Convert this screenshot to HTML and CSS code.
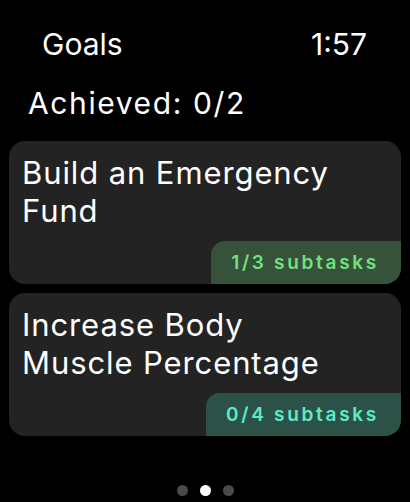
FILE: index.html
```html
<!DOCTYPE html>
<html>
<head>
<meta charset="utf-8">
<title>Goals</title>
<link rel="stylesheet" href="styles.css">
</head>
<body>
<div class="watch">
  <div class="top-bar">
    <span class="app-title">Goals</span>
    <span class="clock">1:57</span>
  </div>
  <h1 class="achieved">Achieved: 0/2</h1>
  <div class="goal-list">
    <div class="goal-card">
      <div class="goal-name">Build an Emergency Fund</div>
      <div class="subtasks subtasks-green">1/3 subtasks</div>
    </div>
    <div class="goal-card">
      <div class="goal-name">Increase Body Muscle Percentage</div>
      <div class="subtasks subtasks-teal">0/4 subtasks</div>
    </div>
  </div>
  <div class="pager">
    <span class="dot"></span>
    <span class="dot active"></span>
    <span class="dot"></span>
  </div>
</div>
</body>
</html>
```
FILE: styles.css
```css
*{
  margin:0;
  padding:0;
  box-sizing:border-box;
}
body{
  background:#000;
  color:#fff;
  font-family:Inter,"Noto Sans",sans-serif;
}
.watch{
  width:410px;
  height:502px;
  display:flex;
  flex-direction:column;
}
.top-bar{
  display:flex;
  justify-content:space-between;
  padding:24px 43px 0 42px;
  font-size:30px;
  line-height:40px;
}
.achieved{
  font-size:30px;
  font-weight:400;
  line-height:40px;
  letter-spacing:1.6px;
  padding:19px 0 0 28px;
}
.goal-list{
  display:flex;
  flex-direction:column;
  gap:9px;
  padding:18px 9px 0 9px;
}
.goal-card{
  background:#232323;
  border-radius:16px;
  height:143px;
  display:flex;
  flex-direction:column;
  overflow:hidden;
}
.goal-name{
  font-size:31px;
  line-height:38px;
  letter-spacing:0.9px;
  padding:13px 45px 0 13px;
}
.subtasks{
  margin-top:auto;
  align-self:flex-end;
  height:43px;
  line-height:43px;
  padding:0 22px 0 20px;
  border-top-left-radius:14px;
  font-size:19px;
  font-weight:600;
  letter-spacing:2.7px;
}
.subtasks-green{
  background:#36523a;
  color:#72e07e;
}
.subtasks-teal{
  background:#2c5248;
  color:#5eeac9;
}
.pager{
  display:flex;
  justify-content:center;
  gap:12px;
  margin-top:auto;
  padding-bottom:6px;
}
.dot{
  width:11px;
  height:11px;
  border-radius:50%;
  background:#4a4a4a;
}
.dot.active{
  background:#fff;
}
```
